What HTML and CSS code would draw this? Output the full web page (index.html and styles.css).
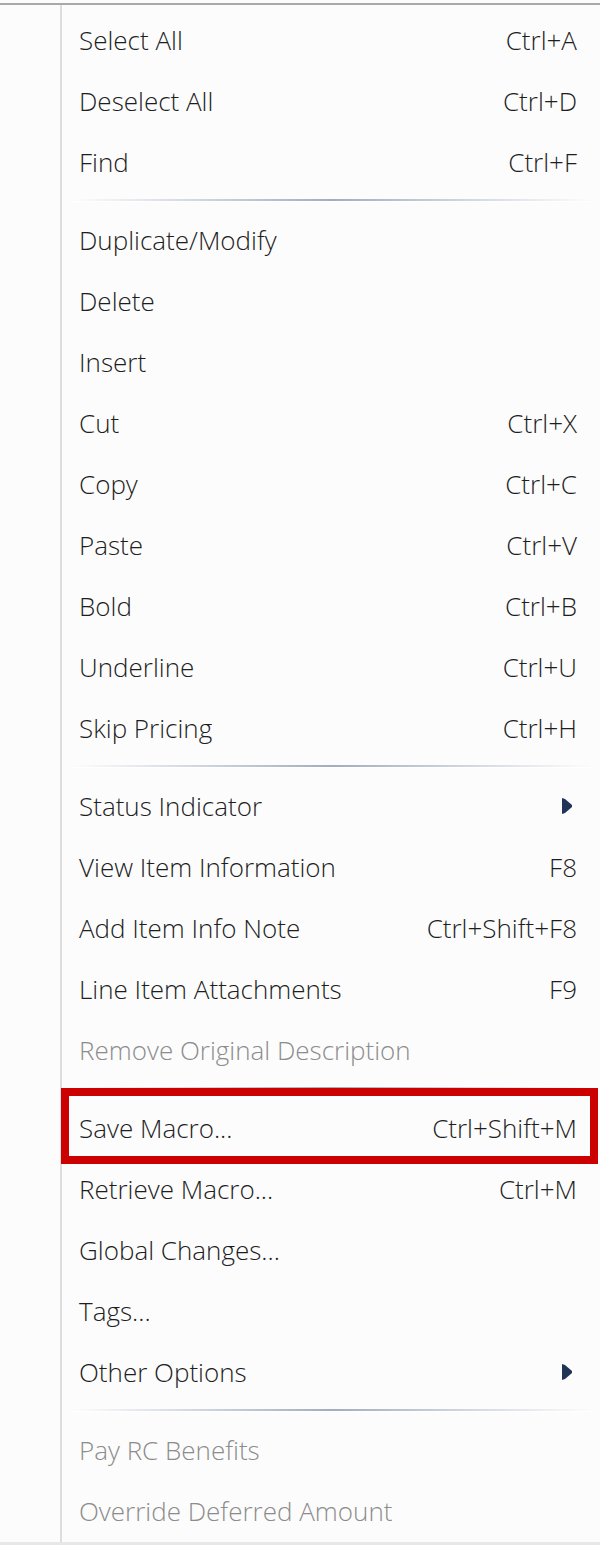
FILE: index.html
```html
<!DOCTYPE html>
<html lang="en">
<head>
    <meta charset="UTF-8">
    <meta name="viewport" content="width=device-width, initial-scale=1.0">
    <title>Context Menu</title>
    <link rel="stylesheet" href="styles.css">
</head>
<body>
    <div class="topline"></div>
    <ul class="menu">
        <li class="item"><span>Select All</span><span class="key">Ctrl+A</span></li>
        <li class="item"><span>Deselect All</span><span class="key">Ctrl+D</span></li>
        <li class="item"><span>Find</span><span class="key">Ctrl+F</span></li>
        <li class="sep"></li>
        <li class="item"><span>Duplicate/Modify</span></li>
        <li class="item"><span>Delete</span></li>
        <li class="item"><span>Insert</span></li>
        <li class="item"><span>Cut</span><span class="key">Ctrl+X</span></li>
        <li class="item"><span>Copy</span><span class="key">Ctrl+C</span></li>
        <li class="item"><span>Paste</span><span class="key">Ctrl+V</span></li>
        <li class="item"><span>Bold</span><span class="key">Ctrl+B</span></li>
        <li class="item"><span>Underline</span><span class="key">Ctrl+U</span></li>
        <li class="item"><span>Skip Pricing</span><span class="key">Ctrl+H</span></li>
        <li class="sep"></li>
        <li class="item"><span>Status Indicator</span>
            <svg class="arrow" width="10" height="16" viewBox="0 0 10 16"><polygon points="0,0 3,1 10,7 10,9 3,15 0,16" fill="#1e3557"/></svg>
        </li>
        <li class="item"><span>View Item Information</span><span class="key">F8</span></li>
        <li class="item"><span>Add Item Info Note</span><span class="key">Ctrl+Shift+F8</span></li>
        <li class="item"><span>Line Item Attachments</span><span class="key">F9</span></li>
        <li class="item disabled"><span>Remove Original Description</span></li>
        <li class="sep"></li>
        <li class="item marked"><span>Save Macro...</span><span class="key">Ctrl+Shift+M</span></li>
        <li class="item"><span>Retrieve Macro...</span><span class="key">Ctrl+M</span></li>
        <li class="item"><span>Global Changes...</span></li>
        <li class="item"><span>Tags...</span></li>
        <li class="item"><span>Other Options</span>
            <svg class="arrow" width="10" height="16" viewBox="0 0 10 16"><polygon points="0,0 3,1 10,7 10,9 3,15 0,16" fill="#1e3557"/></svg>
        </li>
        <li class="sep"></li>
        <li class="item disabled"><span>Pay RC Benefits</span></li>
        <li class="item disabled"><span>Override Deferred Amount</span></li>
    </ul>
    <div class="bottomline"></div>
</body>
</html>
```

FILE: styles.css
```css
body { margin: 0; padding: 0; background: #fcfcfc; font-family: "Open Sans", sans-serif; }
.topline { margin-top: 3px; height: 2px; background: #a9a9a9; }
.menu { list-style: none; margin: 0 0 0 60px; padding: 5px 0 0 0; border-left: 2px solid #dedede; }
.item { position: relative; display: flex; align-items: center; justify-content: space-between; height: 61px; padding: 0 23px 2px 17px; box-sizing: border-box; font-size: 26px; font-weight: 300; color: #1e1e1e; }
.item.disabled { color: #8c8c8c; }
.key { white-space: nowrap; }
.arrow { margin-right: 5px; }
.sep { height: 17px; position: relative; }
.sep::after { content: ""; position: absolute; left: 10px; right: 8px; top: 6px; height: 2px; background: linear-gradient(to right, rgba(160,170,190,0), #a3adbf 50%, rgba(160,170,190,0)); border-bottom: 1px solid #fff; }
.marked::after { content: ""; position: absolute; left: -1px; right: 2px; top: -10px; bottom: -5px; border: 8px solid #cc0000; }
.bottomline { height: 3px; background: #e8e8e8; }
```
